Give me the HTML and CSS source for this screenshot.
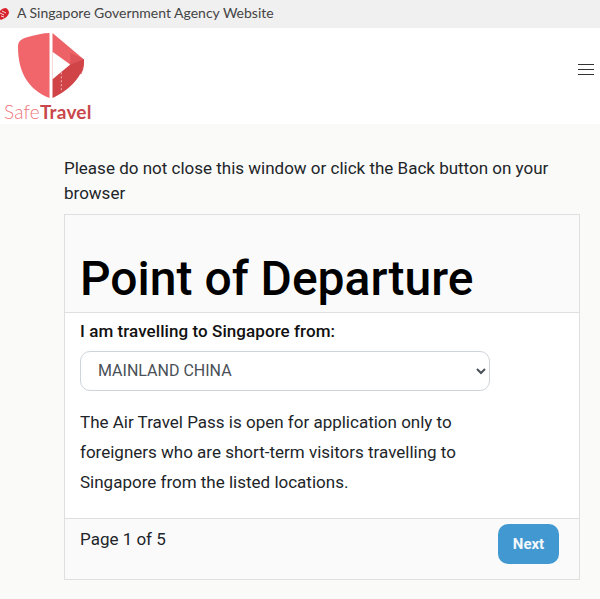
FILE: index.html
```html
<!DOCTYPE html>
<html lang="en">
<head>
  <meta charset="UTF-8">
  <title>Point of Departure</title>
  <link rel="stylesheet" href="styles.css">
</head>
<body>

<div class="gov-bar">
  <svg class="gov-icon" width="12" height="12" viewBox="0 0 12 12">
    <path d="M0 7 C1 3 4 0 8 0 C10 1 11 3 11 5 C10 8 8 10 5 11 L3 12 C1 11 0 9 0 7 Z" fill="#d8232a"/>
    <path d="M2 5 L6 7 M4 3 L8 5 M3 8 L6 9" stroke="#f0f0f0" stroke-width="0.9"/>
  </svg>
  <span>A Singapore Government Agency Website</span>
</div>

<header class="site-header">
  <div class="logo">
    <svg class="logo-mark" width="67" height="67" viewBox="0 0 68 68">
      <path d="M32 0 L32 66 C12 58 0 42 0 14 C0 8 3 6 10 4 C18 2 26 0 32 0 Z" fill="#f0666b"/>
      <path d="M35 0 L67 27 L66 38 L35 47 Z" fill="#ec6266"/>
      <path d="M53 20 L67 27 C67 34 66 38 64 42 L53 32 Z" fill="#de5458"/>
      <path d="M35 66 L35 47 L53 32 L67 27 C67 44 52 58 35 66 Z" fill="#d04448"/>
      <path d="M35 19 L53 32 L35 47 Z" fill="#fff"/>
      <path d="M44 40 L44 59" stroke="#f5b5b5" stroke-width="1" stroke-dasharray="2 2"/>
    </svg>
    <div class="logo-text">Safe<b>Travel</b></div>
  </div>
  <button class="menu-btn" aria-label="Menu">
    <span></span>
    <span></span>
    <span></span>
  </button>
</header>

<main class="content">
  <p class="notice">Please do not close this window or click the Back button on your browser</p>

  <div class="card">
    <div class="card-head">
      <h1>Point of Departure</h1>
    </div>
    <div class="card-body">
      <label for="origin">I am travelling to Singapore from:</label>
      <select id="origin">
        <option>MAINLAND CHINA</option>
      </select>
      <p class="info">The Air Travel Pass is open for application only to foreigners who are short-term visitors travelling to Singapore from the listed locations.</p>
    </div>
    <div class="card-foot">
      <span class="page-count">Page 1 of 5</span>
      <button class="next-btn">Next</button>
    </div>
  </div>
</main>

</body>
</html>
```

FILE: styles.css
```css
* {
  box-sizing: border-box;
}
html, body {
  height: 100%;
}
body {
  margin: 0;
  overflow: hidden;
  background-color: #fafaf8;
  font-family: Roboto, Arial, sans-serif;
  color: #111;
}
.gov-bar {
  display: flex;
  align-items: center;
  gap: 7px;
  height: 28px;
  background-color: #f0f0f0;
  font-family: Lato, Arial, sans-serif;
  font-size: 14px;
  color: #444;
}
.gov-icon {
  margin-left: -2px;
}
.gov-bar span {
  margin-top: -3px;
}
.site-header {
  display: flex;
  align-items: flex-start;
  justify-content: space-between;
  height: 96px;
  padding: 5px 6px 0 4px;
  background-color: #fff;
}
.logo {
  display: flex;
  flex-direction: column;
  align-items: flex-start;
  width: 88px;
}
.logo-mark {
  display: block;
  margin-left: 14px;
}
.logo-text {
  margin-top: 2px;
  font-family: Lato, Arial, sans-serif;
  font-size: 19px;
  font-weight: 300;
  letter-spacing: 0.2px;
  line-height: 20px;
  color: #ee7478;
  white-space: nowrap;
}
.logo-text b {
  font-weight: 700;
  color: #c8474c;
}
.menu-btn {
  display: flex;
  flex-direction: column;
  gap: 4px;
  width: 16px;
  margin-top: 31px;
  padding: 0;
  border: none;
  background: none;
}
.menu-btn span {
  display: block;
  height: 1px;
  background-color: #333;
}
.content {
  padding: 32px 20px 0 64px;
}
.notice {
  margin: 0 0 8px;
  font-size: 17px;
  line-height: 25px;
  color: #212529;
}
.card {
  border: 1px solid #dfdfdf;
  background-color: #fff;
}
.card-head {
  height: 98px;
  padding: 30px 15px 0;
  border-bottom: 1px solid #dfdfdf;
  background-color: #fafafa;
}
h1 {
  margin: 0;
  font-size: 48px;
  font-weight: 500;
  line-height: 67px;
  color: #000;
}
.card-body {
  height: 205px;
  padding: 6px 15px 0;
}
label {
  display: block;
  font-size: 17px;
  font-weight: 500;
  letter-spacing: 0.07px;
  line-height: 24px;
  color: #111;
}
select {
  display: block;
  width: 410px;
  height: 40px;
  margin-top: 8px;
  padding: 0 13px 1px;
  border: 1px solid #ced4da;
  border-radius: 10px;
  background-color: #fff;
  font-family: Roboto, Arial, sans-serif;
  font-size: 16px;
  color: #495057;
}
.info {
  width: 400px;
  margin: 16px 0 0;
  font-size: 17px;
  line-height: 30px;
  color: #212529;
}
.card-foot {
  display: flex;
  align-items: flex-start;
  justify-content: space-between;
  height: 61px;
  padding: 5px 20px 0 15px;
  border-top: 1px solid #dfdfdf;
  background-color: #fafafa;
}
.page-count {
  margin-top: 3px;
  font-size: 17px;
  line-height: 24px;
  color: #212529;
}
.next-btn {
  width: 61px;
  height: 40px;
  border: none;
  border-radius: 10px;
  background-color: #4299d2;
  color: #f4f8fb;
  font-family: Roboto, Arial, sans-serif;
  font-size: 15px;
  font-weight: 700;
}
```
